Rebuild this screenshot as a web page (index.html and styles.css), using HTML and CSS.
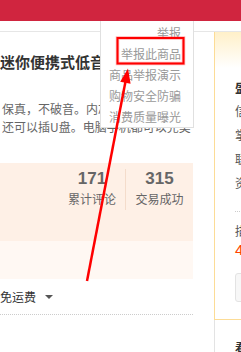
FILE: index.html
```html
<!DOCTYPE html>
<html lang="zh-CN">
<head>
    <meta charset="UTF-8">
    <meta name="viewport" content="width=device-width, initial-scale=1.0">
    <title>商品详情</title>
    <link rel="stylesheet" href="styles.css">
</head>
<body>
    <div class="page">
        <div class="topbar"></div>
        <div class="nav-strip"></div>

        <div class="main">
            <div class="detail">
                <h1 class="title">迷你便携式低音炮音箱</h1>
                <p class="desc">保真，不破音。内芯采用优质单元<br>还可以插U盘。电脑手机都可以完美</p>

                <div class="stats">
                    <div class="stat">
                        <div class="num">171</div>
                        <div class="label">累计评论</div>
                    </div>
                    <div class="stat">
                        <div class="num">315</div>
                        <div class="label">交易成功</div>
                    </div>
                </div>
                <div class="promo"></div>

                <div class="ship">
                    <span>免运费</span>
                    <span class="caret"></span>
                </div>
            </div>

            <div class="side">
                <div class="shop-box">
                    <div class="shop-name">盛世音响专营店</div>
                    <div class="shop-row">信誉：</div>
                    <div class="shop-row">掌柜：</div>
                    <div class="shop-row">联系：</div>
                    <div class="shop-row">资质：</div>
                    <div class="shop-score">
                        <div class="score-title">描述</div>
                        <div class="score-num">4.8</div>
                    </div>
                    <div class="shop-btn"></div>
                </div>
                <div class="side-more">看了又看</div>
            </div>
        </div>

        <!-- report menu hanging from the header -->
        <div class="report-menu">
            <div class="report-item">举报</div>
            <div class="report-item">举报此商品</div>
            <div class="report-item">商品举报演示</div>
            <div class="report-item">购物安全防骗</div>
            <div class="report-item">消费质量曝光</div>
        </div>

        <!-- annotation drawn over the screenshot -->
        <svg class="marks" width="241" height="352" viewBox="0 0 241 352">
            <rect x="117.5" y="38" width="66" height="25.5" fill="none" stroke="#ff6b6b" stroke-opacity="0.5" stroke-width="3.5"/>
            <rect x="117.5" y="38" width="66" height="25.5" fill="none" stroke="#ff0000" stroke-width="2"/>
            <line x1="87" y1="281" x2="125.4" y2="82" stroke="#ff0000" stroke-width="2.5"/>
            <polygon points="128,68.5 130.6,83.8 120.2,81.8" fill="#ff0000"/>
        </svg>
    </div>
</body>
</html>
```

FILE: styles.css
```css
body {
    margin: 0;
    background-color: #fff;
    font-family: "Noto Sans CJK SC", "Liberation Sans", sans-serif;
    font-size: 12px;
    color: #666;
}

.page {
    position: relative;
    width: 241px;
    height: 352px;
    overflow: hidden;
}

.topbar {
    height: 21px;
    background-color: #d0253f;
}

.nav-strip {
    height: 10px;
    border-bottom: 1px solid #e6e6e6;
}

.main {
    display: flex;
    width: 420px;
}

.detail {
    width: 193px;
    flex-shrink: 0;
}

.title {
    margin: 20px 0 0;
    font-size: 15px;
    line-height: 20px;
    font-weight: bold;
    color: #333;
    white-space: nowrap;
}

.desc {
    margin: 28px 0 0;
    padding-left: 2px;
    line-height: 18px;
    color: #666;
    white-space: nowrap;
}

.stats {
    display: flex;
    justify-content: flex-end;
    height: 72px;
    margin-top: 27px;
    padding-top: 6px;
    background-color: #fef0e6;
}

.stat {
    width: 66px;
    height: 41px;
    text-align: center;
}

.stat + .stat {
    width: 67px;
    border-left: 1px solid #f4dccb;
}

.stat .num {
    font-family: "Liberation Sans", sans-serif;
    font-size: 17px;
    font-weight: bold;
    line-height: 20px;
    color: #666;
}

.stat .label {
    line-height: 20px;
    color: #666;
}

.promo {
    height: 38px;
    background-color: #fff8f3;
}

.ship {
    display: flex;
    align-items: center;
    height: 35px;
    border-bottom: 1px dotted #ccc;
    color: #333;
}

.caret {
    width: 0;
    height: 0;
    margin-left: 9px;
    border-left: 4px solid transparent;
    border-right: 4px solid transparent;
    border-top: 4px solid #555;
}

.side {
    width: 200px;
    margin-left: 21px;
    flex-shrink: 0;
}

.shop-box {
    height: 244px;
    padding: 43px 0 0 20px;
    border-left: 1px solid #fcdc96;
    border-bottom: 1px solid #fcdc96;
    background: linear-gradient(#fff0c9 0, #fff 36px);
}

.shop-name {
    font-size: 13px;
    line-height: 24px;
    font-weight: bold;
    color: #333;
}

.shop-row {
    line-height: 24px;
    color: #555;
}

.shop-score {
    margin-top: 16px;
    padding-top: 9px;
    border-top: 1px dotted #ccc;
}

.score-title {
    line-height: 20px;
    color: #555;
}

.score-num {
    font-family: "Liberation Sans", sans-serif;
    font-size: 15px;
    line-height: 18px;
    color: #ff4400;
}

.shop-btn {
    height: 27px;
    margin-top: 14px;
    border: 1px solid #e3e3e3;
    border-radius: 3px;
    background-color: #f7f7f7;
}

.side-more {
    padding-top: 18px;
    height: 40px;
    border-left: 1px solid #e3e3e3;
    padding-left: 20px;
    line-height: 20px;
    font-weight: bold;
    color: #333;
}

.report-menu {
    position: absolute;
    left: 100px;
    top: 21px;
    width: 80px;
    padding: 1px 12px 0 0;
    border: 1px solid #e0e0e0;
    border-top: none;
    background-color: #fff;
    text-align: right;
}

.report-item {
    line-height: 21px;
    color: #999;
    white-space: nowrap;
}

.marks {
    position: absolute;
    left: 0;
    top: 0;
    pointer-events: none;
}
```
